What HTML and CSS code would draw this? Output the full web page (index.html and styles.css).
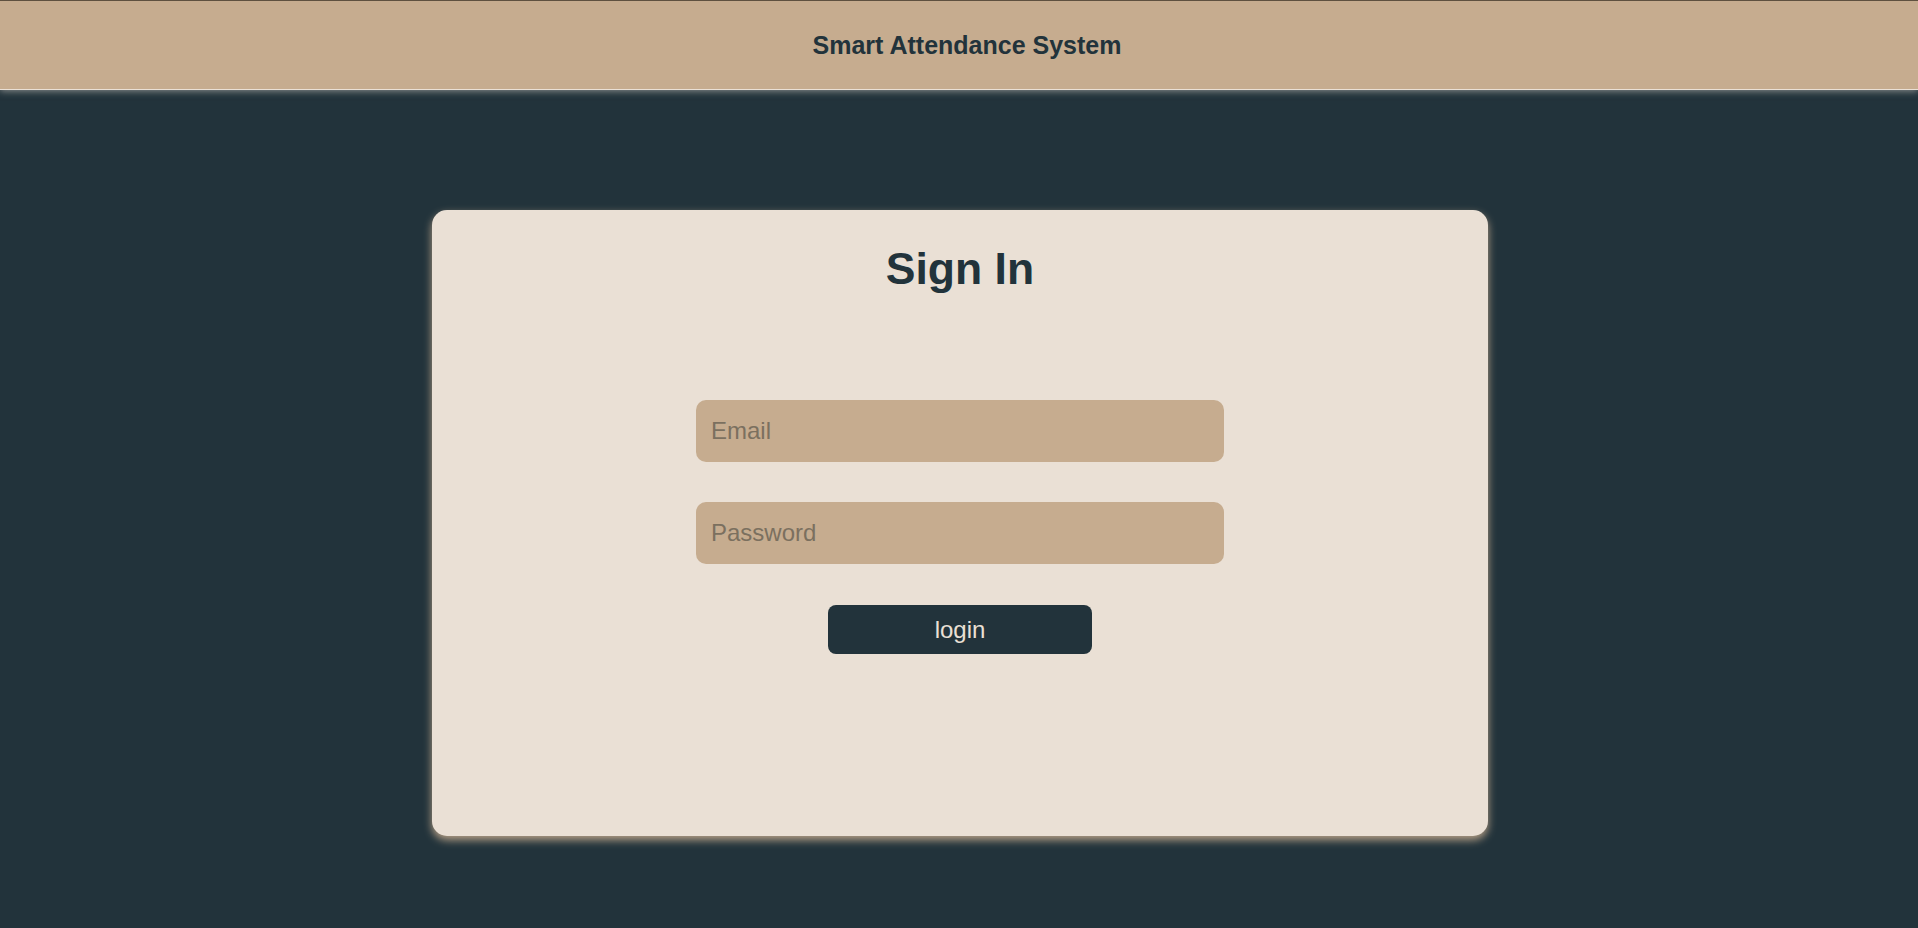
FILE: index.html
```html
<!DOCTYPE html>
<html lang="en">
<head>
<meta charset="utf-8">
<title>Smart Attendance System</title>
<link rel="stylesheet" href="styles.css">
</head>
<body>
<header class="topbar">
  <h2 class="brand">Smart Attendance System</h2>
</header>
<main class="page">
  <section class="card">
    <h1 class="card-title">Sign In</h1>
    <form class="login-form">
      <input class="field" type="email" placeholder="Email">
      <input class="field" type="password" placeholder="Password">
      <button class="btn" type="button">login</button>
    </form>
  </section>
</main>
</body>
</html>
```

FILE: styles.css
```css
html, body {
  margin: 0;
  padding: 0;
  height: 100%;
}
body {
  background: #22333b;
  font-family: "Liberation Sans", Arial, sans-serif;
  color: #22333b;
}
.topbar {
  height: 88px;
  background: #c6ac8f;
  border-top: 1px solid #5e503f;
  display: flex;
  align-items: center;
  justify-content: center;
  padding-left: 16px;
  box-shadow: 0 1px 0 #eae0d5, 0 2px 7px rgba(234, 224, 213, 0.55);
  position: relative;
  z-index: 1;
}
.brand {
  margin: 0;
  font-size: 25px;
  font-weight: bold;
  color: #22333b;
}
.page {
  display: flex;
  justify-content: center;
  padding-top: 121px;
  padding-left: 2px;
}
.card {
  width: 1056px;
  height: 626px;
  box-sizing: border-box;
  background: #eae0d5;
  border-radius: 15px;
  padding-top: 34px;
  box-shadow: 0 4px 8px rgba(198, 172, 143, 0.9);
  display: flex;
  flex-direction: column;
  align-items: center;
}
.card-title {
  margin: 0;
  font-size: 44.5px;
  font-weight: bold;
  color: #22333b;
}
.login-form {
  margin-top: 106px;
  display: flex;
  flex-direction: column;
  align-items: center;
  gap: 40px;
}
.field {
  width: 528px;
  height: 62px;
  box-sizing: border-box;
  border: none;
  outline: none;
  border-radius: 10px;
  background: #c6ac8f;
  padding: 0 15px;
  font-family: "Liberation Sans", Arial, sans-serif;
  font-size: 24px;
  color: #22333b;
}
.field::placeholder {
  color: #7b705f;
}
.btn {
  width: 264px;
  height: 49px;
  margin-top: 1px;
  border: none;
  border-radius: 8px;
  background: #22333b;
  color: #eae0d5;
  font-family: "Liberation Sans", Arial, sans-serif;
  font-size: 24px;
  cursor: pointer;
}
```
